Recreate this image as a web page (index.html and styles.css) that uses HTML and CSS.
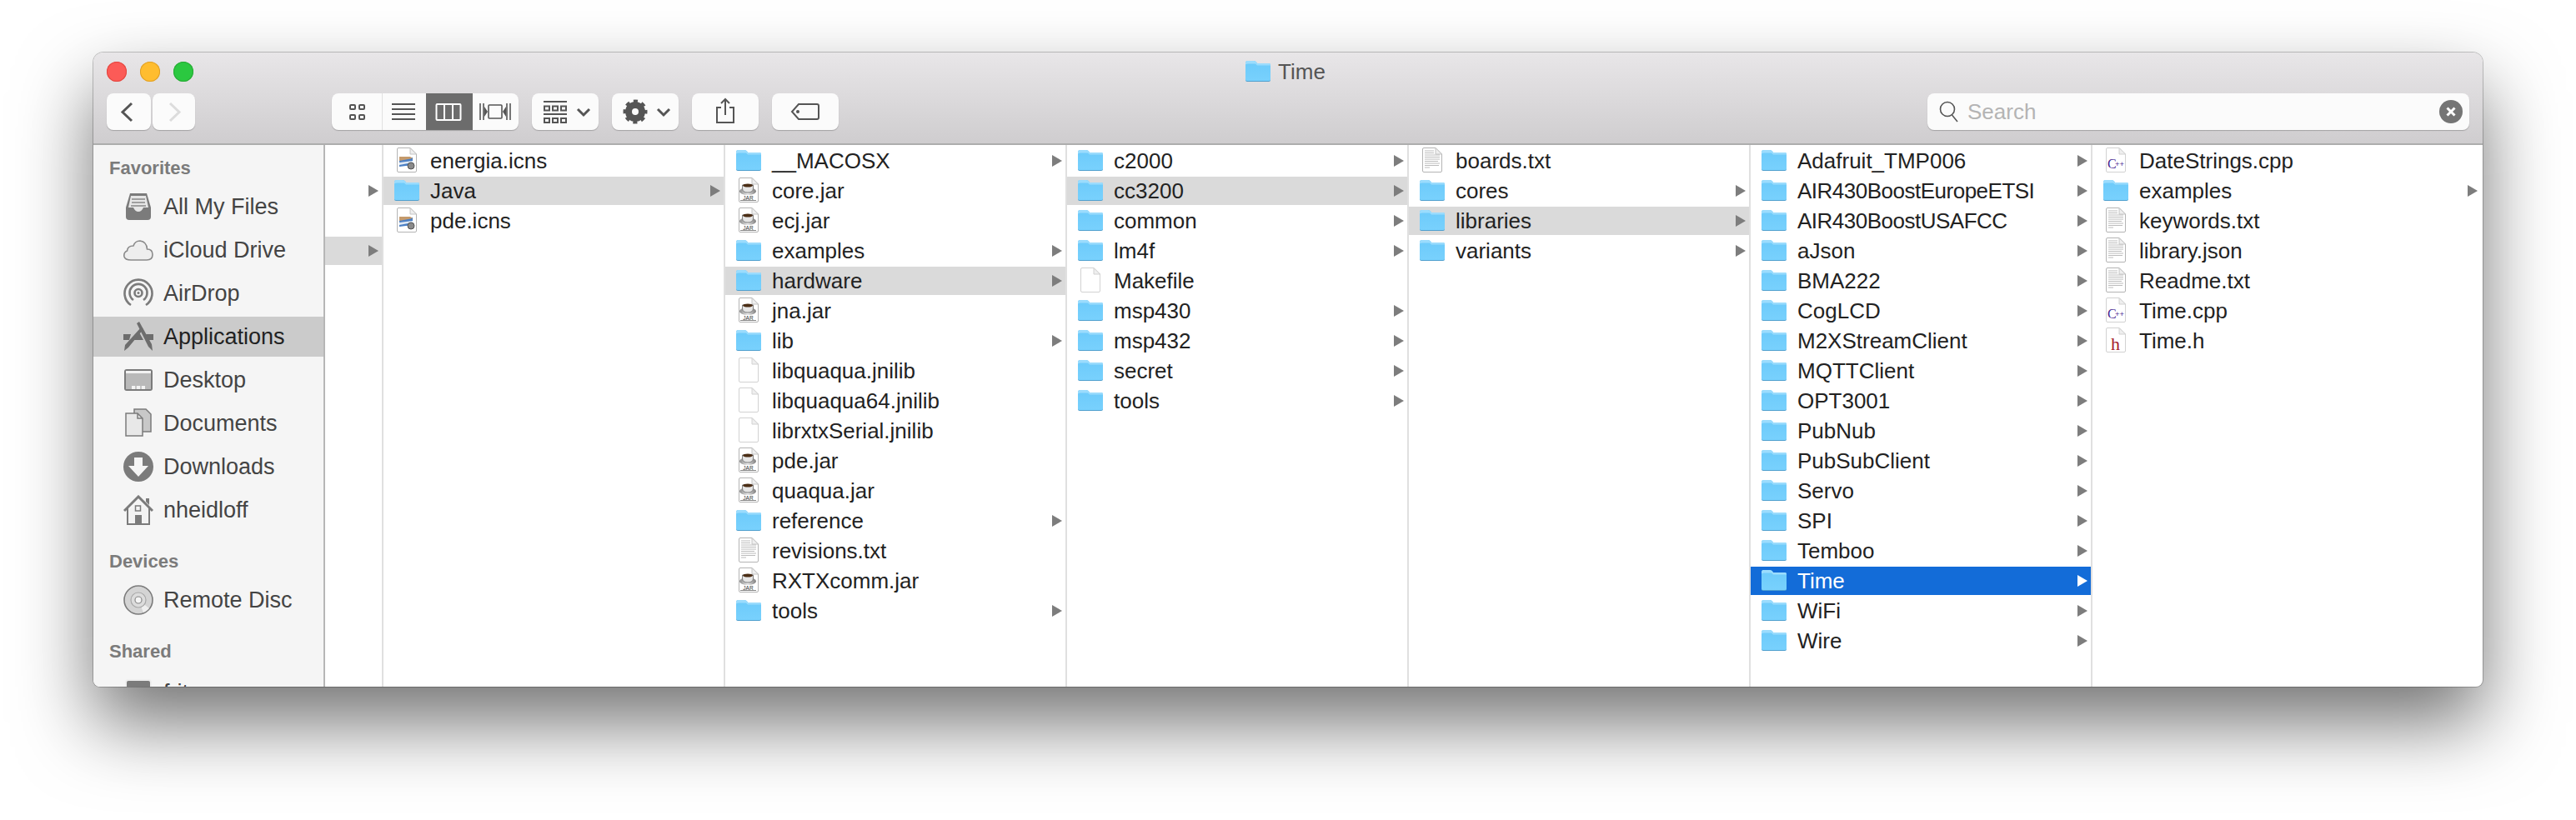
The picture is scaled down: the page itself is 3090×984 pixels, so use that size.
FILE: index.html
```html
<!DOCTYPE html>
<html lang="en">
<head>
<meta charset="utf-8">
<title>Time</title>
<link rel="stylesheet" href="styles.css">
</head>
<body>
<svg class="defs" aria-hidden="true">
  <defs>
    <linearGradient id="fg" x1="0" y1="0" x2="0" y2="1"><stop offset="0" stop-color="#6ccafa"/><stop offset="1" stop-color="#78d1fd"/></linearGradient>
    <linearGradient id="cup" x1="0" y1="0" x2="1" y2="0"><stop offset="0" stop-color="#8a8a8a"/><stop offset=".5" stop-color="#e8e8e8"/><stop offset="1" stop-color="#7a7a7a"/></linearGradient>
    <symbol id="folder" viewBox="0 0 30 34">
      <path d="M0 7.500Q0 5 2 5H10Q12 5 13 6.500L14 8H28Q30 8 30 10V27Q30 29 28 29H2Q0 29 0 27Z" fill="#4f9fce"/>
      <path d="M0 7.500Q0 4 2 4H10Q12 4 13 5.500L14 7H28Q30 7 30 9V26.500Q30 28 28 28H2Q0 28 0 26.500Z" fill="url(#fg)"/>
      <path d="M0 9V7.500Q0 4 2 4H10Q12 4 13 5.500L14 7H28Q30 7 30 9V9.500H14L12 7.500H3Q0 7.500 0 9Z" fill="#9bdcfd"/>
    </symbol>
    <symbol id="page" viewBox="0 0 30 34">
      <path d="M5 1.500H19L26.500 9V29Q26.500 30.500 25 30.500H5Q3.500 30.500 3.500 29V3Q3.500 1.500 5 1.500Z" fill="#fff" stroke="#d2d2d2"/>
      <path d="M19 1.500V9H26.500Z" fill="#efefef" stroke="#d2d2d2"/>
    </symbol>
    <symbol id="page-dark" viewBox="0 0 30 34">
      <path d="M5 1.500H19L26.500 9V29Q26.500 30.500 25 30.500H5Q3.500 30.500 3.500 29V3Q3.500 1.500 5 1.500Z" fill="#fff" stroke="#b4b4b4"/>
      <path d="M19 1.500V9H26.500Z" fill="#efefef" stroke="#c4c4c4"/>
    </symbol>
    <symbol id="txt" viewBox="0 0 30 34">
      <use href="#page-dark" width="30" height="34"/>
      <path d="M6 5H17M6 7.500H17M6 10H24M6 12.500H24M6 15H24M6 17.500H22M6 20H24M6 22.500H23M6 25H12" stroke="#bcbcbc" stroke-width="1"/>
    </symbol>
    <symbol id="jar" viewBox="0 0 30 34">
      <use href="#page-dark" width="30" height="34"/>
      <ellipse cx="14" cy="17.500" rx="10" ry="4.500" fill="url(#cup)"/>
      <path d="M7.500 10H20.500V14Q20.500 19 14 19T7.500 14Z" fill="#e6e6e6" stroke="#666" stroke-width=".8"/>
      <ellipse cx="14" cy="10.500" rx="6" ry="2" fill="#4b2e16"/>
      <path d="M5 28.500H24" stroke="#888" stroke-width="1"/>
      <text x="14.500" y="28" class="jar-text">JAR</text>
    </symbol>
    <symbol id="cpp" viewBox="0 0 30 34">
      <use href="#page" width="30" height="34"/>
      <text x="5" y="26" class="cpp-c">C</text>
      <text x="14" y="23.500" class="cpp-p">++</text>
    </symbol>
    <symbol id="hdr" viewBox="0 0 30 34">
      <use href="#page" width="30" height="34"/>
      <text x="9" y="28" class="hdr-h">h</text>
    </symbol>
    <symbol id="icns" viewBox="0 0 30 34">
      <use href="#page-dark" width="30" height="34"/>
      <path d="M6 15L22 13V22L6 24Z" fill="#4b7fc4"/>
      <path d="M6 12H19L22 14L6 17Z" fill="#c49a6c"/>
      <path d="M6 19L22 17V19L6 22Z" fill="#dfe9f5"/>
      <circle cx="20" cy="23" r="4" fill="#8a8a8a" stroke="#555"/>
    </symbol>
  </defs>
</svg>

<main class="window">
  <header class="toolbar">
    <div class="titlebar">
      <div class="lights">
        <span class="light red"></span><span class="light amber"></span><span class="light green"></span>
      </div>
      <div class="title"><svg class="title-ic"><use href="#folder"/></svg><span>Time</span></div>
    </div>
    <div class="tools">
      <div class="nav">
        <button class="btn back"><svg width="53" height="44"><path d="M30 12L19 22.500L30 33" class="stroke thick"/></svg></button>
        <button class="btn forward"><svg width="51" height="44"><path d="M21 12L32 22.500L21 33" class="stroke thick faint"/></svg></button>
      </div>
      <div class="seg">
        <div class="cell icons"><svg width="60" height="44"><g class="stroke"><rect x="22" y="14" width="6" height="5" rx="1"/><rect x="33" y="14" width="6" height="5" rx="1"/><rect x="22" y="26" width="6" height="5" rx="1"/><rect x="33" y="26" width="6" height="5" rx="1"/></g></svg></div>
        <div class="cell list"><svg width="52" height="44"><path d="M11 13H39M11 19H39M11 25H39M11 31H39" class="stroke"/></svg></div>
        <div class="cell cols on"><svg width="56" height="44"><g class="stroke white"><rect x="12.500" y="13" width="29" height="19" rx="1"/><path d="M22 13V32M32 13V32"/></g></svg></div>
        <div class="cell flow"><svg width="55" height="44"><g class="stroke thin"><rect x="19" y="14" width="16" height="16" rx="1"/><path d="M9 12V32M13 12V32M41 12V32M45 12V32"/></g><path d="M14 16L18 22L14 28ZM40 16L36 22L40 28Z" fill="#555"/></svg></div>
      </div>
      <button class="btn wide"><svg width="80" height="44"><g class="stroke"><path d="M14 10H42M14 25H42"/><rect x="15" y="15.500" width="6" height="5"/><rect x="25" y="15.500" width="6" height="5"/><rect x="35" y="15.500" width="6" height="5"/><rect x="15" y="30" width="6" height="5"/><rect x="25" y="30" width="6" height="5"/><rect x="35" y="30" width="6" height="5"/></g><path d="M55 19L62 26L69 19" class="stroke thick"/></svg></button>
      <button class="btn wide"><svg width="80" height="44"><circle cx="28" cy="22" r="8" fill="none" stroke="#555" stroke-width="8"/><circle cx="28" cy="22" r="12.500" fill="none" stroke="#555" stroke-width="4" stroke-dasharray="5 4.820" stroke-dashoffset="2.500"/><path d="M55 19L62 26L69 19" class="stroke thick"/></svg></button>
      <button class="btn wide"><svg width="80" height="44"><path d="M35 17H30V35H50V17H45M40 7V26M35 12L40 7L45 12" class="stroke"/></svg></button>
      <button class="btn wide"><svg width="80" height="44"><path d="M32 13H54Q56 13 56 15V29Q56 31 54 31H32L24 22Z" class="stroke"/><circle cx="31" cy="22" r="2" fill="#555"/></svg></button>
      <div class="search">
        <svg class="search-ic" width="26" height="26"><circle cx="11" cy="10" r="8.500" class="stroke thin"/><path d="M16.500 17L23 25" class="stroke thin"/></svg>
        <span class="search-text">Search</span>
        <span class="clear"><svg width="28" height="28"><path d="M9.500 9.500L18.500 18.500M18.500 9.500L9.500 18.500" class="stroke thick white"/></svg></span>
      </div>
    </div>
  </header>

  <div class="body">
    <nav class="sidebar">
      <h2 class="label">Favorites</h2>
      <ul class="group">
        <li class="item"><svg class="si" viewBox="0 0 36 36"><path d="M8 2H28L33 19V30Q33 34 29 34H7Q3 34 3 30V19Z" fill="#7b7b7b"/><path d="M9 5H27L30 19H24Q22 24 18 24T12 19H6Z" fill="#e6e6e6"/><path d="M10 9H26M10 13H26M9 17H27" stroke="#888" stroke-width="1.500"/></svg><span>All My Files</span></li>
        <li class="item"><svg class="si" viewBox="0 0 36 36"><path d="M9 30H28Q35 30 35 23.500Q35 17 28.500 17Q28 8 20 7Q14 7 12 13Q5 13 4.500 19Q0 21 1 26Q2 30 9 30Z" fill="#eee" stroke="#8a8a8a" stroke-width="1.600"/></svg><span>iCloud Drive</span></li>
        <li class="item"><svg class="si" viewBox="0 0 36 36"><g fill="none" stroke="#7b7b7b" stroke-width="2.600"><path d="M9 32A16.500 16.500 0 1 1 27 32"/><path d="M12 26A10.500 10.500 0 1 1 24 26"/><circle cx="18" cy="17.500" r="4.500"/></g><circle cx="18" cy="17.500" r="1.500" fill="#7b7b7b"/></svg><span>AirDrop</span></li>
        <li class="item selected"><svg class="si" viewBox="0 0 36 36"><path d="M0 15H9L7 22H0ZM27 15H36V22H29Z" fill="#6d6d6d"/><path d="M18 11L24 22H12Z" fill="#6d6d6d"/><path d="M16 2L19 0L34 27L35 35L30 30Z" fill="#6d6d6d"/><path d="M21 7L24 9L6 31L1 35L2 28Z" fill="#6d6d6d"/></svg><span>Applications</span></li>
        <li class="item"><svg class="si" viewBox="0 0 36 36"><rect x="1" y="5" width="34" height="26" rx="3" fill="#7b7b7b"/><rect x="3" y="7" width="30" height="3" fill="#f2f2f2"/><rect x="3" y="10" width="30" height="19" fill="#b9b9b9"/><path d="M10 25H26V29H10Z" fill="#f2f2f2"/><path d="M15 25V29M21 25V29" stroke="#9a9a9a"/></svg><span>Desktop</span></li>
        <li class="item"><svg class="si" viewBox="0 0 36 36"><path d="M13 1H27L33 7V28H13Z" fill="#c8c8c8" stroke="#7b7b7b" stroke-width="1.500"/><path d="M3 6H17L23 12V33H3Z" fill="#e8e8e8" stroke="#7b7b7b" stroke-width="1.500"/><path d="M17 6V12H23" fill="none" stroke="#7b7b7b" stroke-width="1.500"/></svg><span>Documents</span></li>
        <li class="item"><svg class="si" viewBox="0 0 36 36"><circle cx="18" cy="18" r="18" fill="#7b7b7b"/><path d="M13 7H23V17H30L18 30L6 17H13Z" fill="#f5f5f5"/></svg><span>Downloads</span></li>
        <li class="item"><svg class="si" viewBox="0 0 36 36"><path d="M5 16V35H31V16" fill="#f2f2f2" stroke="#7b7b7b" stroke-width="2"/><path d="M1 19L18 2L35 19" fill="none" stroke="#7b7b7b" stroke-width="3"/><path d="M27 4H31V12L27 8Z" fill="#7b7b7b"/><rect x="14.500" y="13" width="6" height="6" fill="none" stroke="#7b7b7b" stroke-width="1.500"/><rect x="14" y="24" width="8" height="11" fill="#7b7b7b"/></svg><span>nheidloff</span></li>
      </ul>
      <h2 class="label">Devices</h2>
      <ul class="group">
        <li class="item"><svg class="si" viewBox="0 0 36 36"><circle cx="18" cy="18" r="17" fill="#d4d4d4" stroke="#7b7b7b" stroke-width="1.600"/><path d="M18 18L31 28A17 17 0 0 1 24 33Z" fill="#efefef"/><circle cx="18" cy="18" r="9" fill="#dcdcdc" stroke="#a8a8a8" stroke-width="1.200"/><circle cx="18" cy="18" r="4" fill="#f5f5f5" stroke="#8a8a8a" stroke-width="1.200"/></svg><span>Remote Disc</span></li>
      </ul>
      <h2 class="label label-shared">Shared</h2>
      <ul class="group">
        <li class="item"><svg class="si" viewBox="0 0 36 36"><rect x="3" y="3" width="30" height="26" rx="3" fill="#7b7b7b" stroke="#8a8a8a"/><rect x="3" y="3" width="30" height="26" rx="3" fill="none" stroke="#eee" stroke-width="2"/></svg><span>fritz-nas</span></li>
      </ul>
    </nav>

    <div class="browser">
      <ul class="col col-stub">
        <li class="row"></li>
        <li class="row"><i class="arrow"></i></li>
        <li class="row"></li>
        <li class="row active"><i class="arrow"></i></li>
      </ul>

      <ul class="col">
        <li class="row"><svg class="ic"><use href="#icns"/></svg><span>energia.icns</span></li>
        <li class="row active"><svg class="ic"><use href="#folder"/></svg><span>Java</span><i class="arrow"></i></li>
        <li class="row"><svg class="ic"><use href="#icns"/></svg><span>pde.icns</span></li>
      </ul>

      <ul class="col">
        <li class="row"><svg class="ic"><use href="#folder"/></svg><span>__MACOSX</span><i class="arrow"></i></li>
        <li class="row"><svg class="ic"><use href="#jar"/></svg><span>core.jar</span></li>
        <li class="row"><svg class="ic"><use href="#jar"/></svg><span>ecj.jar</span></li>
        <li class="row"><svg class="ic"><use href="#folder"/></svg><span>examples</span><i class="arrow"></i></li>
        <li class="row active"><svg class="ic"><use href="#folder"/></svg><span>hardware</span><i class="arrow"></i></li>
        <li class="row"><svg class="ic"><use href="#jar"/></svg><span>jna.jar</span></li>
        <li class="row"><svg class="ic"><use href="#folder"/></svg><span>lib</span><i class="arrow"></i></li>
        <li class="row"><svg class="ic"><use href="#page"/></svg><span>libquaqua.jnilib</span></li>
        <li class="row"><svg class="ic"><use href="#page"/></svg><span>libquaqua64.jnilib</span></li>
        <li class="row"><svg class="ic"><use href="#page"/></svg><span>librxtxSerial.jnilib</span></li>
        <li class="row"><svg class="ic"><use href="#jar"/></svg><span>pde.jar</span></li>
        <li class="row"><svg class="ic"><use href="#jar"/></svg><span>quaqua.jar</span></li>
        <li class="row"><svg class="ic"><use href="#folder"/></svg><span>reference</span><i class="arrow"></i></li>
        <li class="row"><svg class="ic"><use href="#txt"/></svg><span>revisions.txt</span></li>
        <li class="row"><svg class="ic"><use href="#jar"/></svg><span>RXTXcomm.jar</span></li>
        <li class="row"><svg class="ic"><use href="#folder"/></svg><span>tools</span><i class="arrow"></i></li>
      </ul>

      <ul class="col">
        <li class="row"><svg class="ic"><use href="#folder"/></svg><span>c2000</span><i class="arrow"></i></li>
        <li class="row active"><svg class="ic"><use href="#folder"/></svg><span>cc3200</span><i class="arrow"></i></li>
        <li class="row"><svg class="ic"><use href="#folder"/></svg><span>common</span><i class="arrow"></i></li>
        <li class="row"><svg class="ic"><use href="#folder"/></svg><span>lm4f</span><i class="arrow"></i></li>
        <li class="row"><svg class="ic"><use href="#page"/></svg><span>Makefile</span></li>
        <li class="row"><svg class="ic"><use href="#folder"/></svg><span>msp430</span><i class="arrow"></i></li>
        <li class="row"><svg class="ic"><use href="#folder"/></svg><span>msp432</span><i class="arrow"></i></li>
        <li class="row"><svg class="ic"><use href="#folder"/></svg><span>secret</span><i class="arrow"></i></li>
        <li class="row"><svg class="ic"><use href="#folder"/></svg><span>tools</span><i class="arrow"></i></li>
      </ul>

      <ul class="col">
        <li class="row"><svg class="ic"><use href="#txt"/></svg><span>boards.txt</span></li>
        <li class="row"><svg class="ic"><use href="#folder"/></svg><span>cores</span><i class="arrow"></i></li>
        <li class="row active"><svg class="ic"><use href="#folder"/></svg><span>libraries</span><i class="arrow"></i></li>
        <li class="row"><svg class="ic"><use href="#folder"/></svg><span>variants</span><i class="arrow"></i></li>
      </ul>

      <ul class="col">
        <li class="row"><svg class="ic"><use href="#folder"/></svg><span>Adafruit_TMP006</span><i class="arrow"></i></li>
        <li class="row"><svg class="ic"><use href="#folder"/></svg><span class="tight">AIR430BoostEuropeETSI</span><i class="arrow"></i></li>
        <li class="row"><svg class="ic"><use href="#folder"/></svg><span class="tight">AIR430BoostUSAFCC</span><i class="arrow"></i></li>
        <li class="row"><svg class="ic"><use href="#folder"/></svg><span>aJson</span><i class="arrow"></i></li>
        <li class="row"><svg class="ic"><use href="#folder"/></svg><span>BMA222</span><i class="arrow"></i></li>
        <li class="row"><svg class="ic"><use href="#folder"/></svg><span>CogLCD</span><i class="arrow"></i></li>
        <li class="row"><svg class="ic"><use href="#folder"/></svg><span>M2XStreamClient</span><i class="arrow"></i></li>
        <li class="row"><svg class="ic"><use href="#folder"/></svg><span>MQTTClient</span><i class="arrow"></i></li>
        <li class="row"><svg class="ic"><use href="#folder"/></svg><span>OPT3001</span><i class="arrow"></i></li>
        <li class="row"><svg class="ic"><use href="#folder"/></svg><span>PubNub</span><i class="arrow"></i></li>
        <li class="row"><svg class="ic"><use href="#folder"/></svg><span>PubSubClient</span><i class="arrow"></i></li>
        <li class="row"><svg class="ic"><use href="#folder"/></svg><span>Servo</span><i class="arrow"></i></li>
        <li class="row"><svg class="ic"><use href="#folder"/></svg><span>SPI</span><i class="arrow"></i></li>
        <li class="row"><svg class="ic"><use href="#folder"/></svg><span>Temboo</span><i class="arrow"></i></li>
        <li class="row current"><svg class="ic"><use href="#folder"/></svg><span>Time</span><i class="arrow"></i></li>
        <li class="row"><svg class="ic"><use href="#folder"/></svg><span>WiFi</span><i class="arrow"></i></li>
        <li class="row"><svg class="ic"><use href="#folder"/></svg><span>Wire</span><i class="arrow"></i></li>
      </ul>

      <ul class="col col-last">
        <li class="row"><svg class="ic"><use href="#cpp"/></svg><span>DateStrings.cpp</span></li>
        <li class="row"><svg class="ic"><use href="#folder"/></svg><span>examples</span><i class="arrow"></i></li>
        <li class="row"><svg class="ic"><use href="#txt"/></svg><span>keywords.txt</span></li>
        <li class="row"><svg class="ic"><use href="#txt"/></svg><span>library.json</span></li>
        <li class="row"><svg class="ic"><use href="#txt"/></svg><span>Readme.txt</span></li>
        <li class="row"><svg class="ic"><use href="#cpp"/></svg><span>Time.cpp</span></li>
        <li class="row"><svg class="ic"><use href="#hdr"/></svg><span>Time.h</span></li>
      </ul>
    </div>
  </div>
</main>
</body>
</html>
```

FILE: styles.css
```css
* { box-sizing: border-box; }

html, body { margin: 0; height: 984px; }

body {
  padding: 63px 0 0 112px;
  background: #fff;
  overflow: hidden;
  font-family: "Liberation Sans", Arial, sans-serif;
}

ul { list-style: none; margin: 0; padding: 0; }

.defs { display: block; width: 0; height: 0; overflow: hidden; }

.window {
  width: 2866px;
  height: 761px;
  display: flex;
  flex-direction: column;
  overflow: hidden;
  border-radius: 12px 12px 8px 8px;
  background: #fff;
  box-shadow: 0 0 0 1px rgba(0, 0, 0, .22), 0 44px 90px rgba(0, 0, 0, .55);
}

/* toolbar */
.toolbar {
  flex: none;
  height: 111px;
  background: linear-gradient(#e8e6e8, #cfcdcf);
  border-bottom: 2px solid #adadad;
}

.titlebar {
  height: 49px;
  display: grid;
  grid-template-columns: 1fr auto 1fr;
  padding: 11px 16px 0;
}

.lights { display: flex; gap: 16px; }

.light { width: 24px; height: 24px; border-radius: 50%; }
.red { background: #fc5b57; box-shadow: inset 0 0 0 1px #e2463f; }
.amber { background: #ffbd2f; box-shadow: inset 0 0 0 1px #e0a028; }
.green { background: #2bc840; box-shadow: inset 0 0 0 1px #27a934; }

.title {
  display: flex;
  align-items: center;
  gap: 9px;
  height: 24px;
  margin-left: -6px;
  font-size: 26px;
  color: #555;
}

.title-ic { width: 30px; height: 34px; }

.tools { display: flex; align-items: stretch; gap: 16px; height: 44px; padding: 0 16px; }

.btn, .seg, .search {
  border: 0;
  padding: 0;
  background: #fbfbfb;
  border-radius: 8px;
  box-shadow: 0 1px 1px rgba(0, 0, 0, .22);
}

.btn svg, .cell svg, .clear svg { display: block; }

.nav { display: flex; gap: 2px; }
.back { width: 53px; }
.forward { width: 51px; }
.wide { width: 80px; }

.seg { display: flex; width: 224px; margin-left: 148px; overflow: hidden; }
.cell { flex: none; }
.icons { width: 61px; border-right: 1px solid #e2e2e2; }
.list { width: 52px; }
.cols { width: 56px; }
.flow { width: 55px; }
.on { background: #6c6c6c; }

.stroke { fill: none; stroke: #555; stroke-width: 2; }
.thick { stroke-width: 3; }
.thin { stroke-width: 1.600; }
.white { stroke: #fff; }
.faint { stroke: #dcdcdc; }

.search {
  width: 650px;
  margin-left: auto;
  display: flex;
  align-items: center;
  padding: 0 8px 0 13px;
  font-size: 26px;
  color: #b4b4b4;
}

.search-ic { flex: none; }
.search-text { margin-left: 9px; }
.clear {
  width: 28px;
  height: 28px;
  margin-left: auto;
  border-radius: 50%;
  background: #757575;
}

/* main area */
.body { flex: 1; min-height: 0; display: flex; }

.sidebar {
  flex: none;
  width: 278px;
  overflow: hidden;
  background: #f5f5f5;
  border-right: 2px solid #b6b6b6;
  color: #444;
}

.label {
  height: 28px;
  margin: 24px 0 8px;
  padding-left: 19px;
  font-size: 22px;
  line-height: 28px;
  font-weight: 700;
  color: #7b7b7b;
}

.label:first-child { margin-top: 14px; }
.label-shared { margin-bottom: 11px; }

.group { display: flex; flex-direction: column; gap: 4px; }

.item {
  display: flex;
  align-items: center;
  gap: 12px;
  height: 48px;
  flex: none;
  padding-left: 36px;
  font-size: 27px;
}

.selected { background: #cbcbcb; color: #222; }

.si { flex: none; width: 36px; height: 36px; }

.browser { flex: 1; min-width: 0; display: flex; }

.col {
  flex: none;
  width: 410px;
  display: flex;
  flex-direction: column;
  gap: 2px;
  padding-top: 2px;
  border-right: 2px solid #e0e0e0;
}

.col-stub { width: 70px; }
.col-last { flex: 1; width: auto; border-right: 0; padding-right: 2px; }

.row {
  flex: none;
  display: flex;
  align-items: center;
  height: 34px;
  padding: 0 4px 0 13px;
  font-size: 26px;
  line-height: 34px;
  color: #222;
  white-space: nowrap;
}

.tight { letter-spacing: -0.500px; }

.active { background: #dadada; }
.current { background: #136cd8; color: #fff; }

.ic { flex: none; width: 30px; height: 34px; margin-right: 13px; }

.arrow {
  width: 12px;
  height: 14px;
  margin-left: auto;
  background: #7d7d7d;
  clip-path: polygon(0 0, 100% 50%, 0 100%);
}

.current .arrow { background: #fff; }

.jar-text { font-family: "Liberation Sans", sans-serif; font-size: 6.500px; text-anchor: middle; fill: #333; }
.cpp-c { font-family: "Liberation Serif", serif; font-size: 16px; fill: #4a2a92; }
.cpp-p { font-family: "Liberation Sans", sans-serif; font-size: 9.500px; fill: #4a2a92; }
.hdr-h { font-family: "Liberation Serif", serif; font-size: 22px; fill: #a81e2e; }
```
